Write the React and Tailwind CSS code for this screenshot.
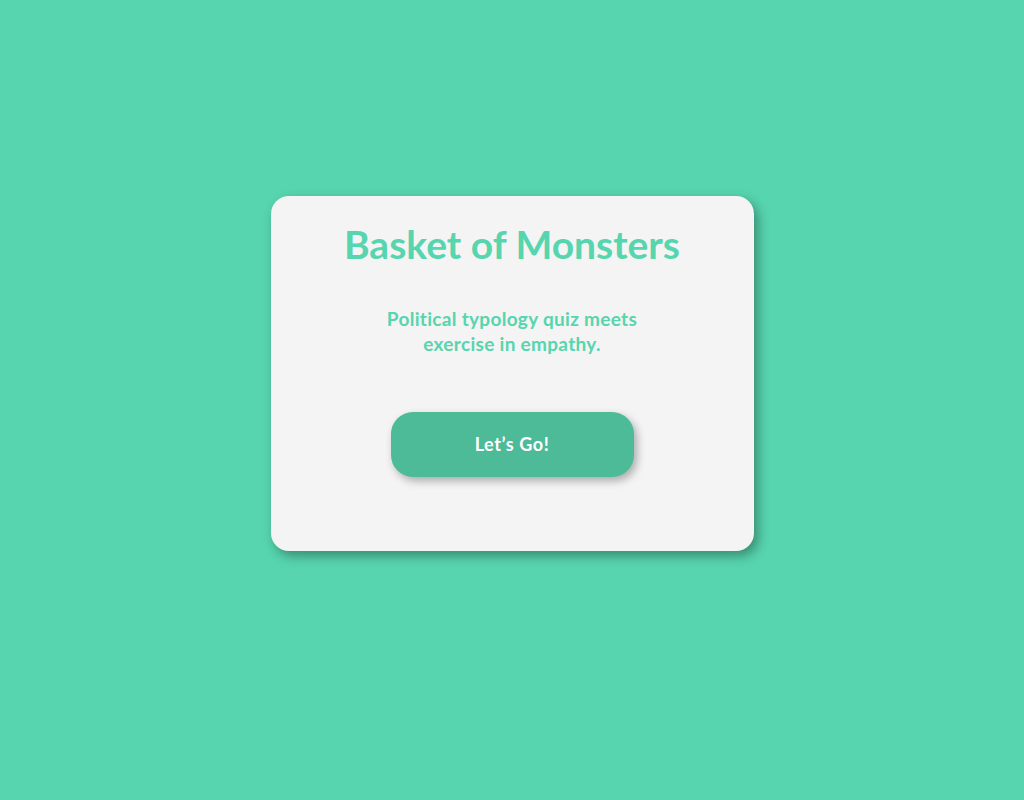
// App.jsx
// Landing card: title, tagline and a start button on a mint background

export default function App() {
  return (
    <div
      className="min-h-screen w-full bg-[#57d5ae] pt-[196px]"
      style={{ fontFamily: 'Lato, "Open Sans", sans-serif' }}
    >
      <div className="mx-auto flex h-[355px] w-[483px] flex-col items-center rounded-[18px] bg-[#f4f4f4] shadow-[4px_5px_12px_rgba(0,0,0,0.35)]">

        {/* Title */}
        <h1 className="mt-[26px] text-[39px] font-bold leading-[44px] text-[#57d5ae]">
          Basket of Monsters
        </h1>

        {/* Tagline */}
        <p className="mt-[40px] w-[290px] text-center text-[19px] font-bold leading-[25px] tracking-[0.3px] text-[#57d5ae]">
          Political typology quiz meets exercise in empathy.
        </p>

        {/* Start button */}
        <button className="mt-[56px] h-[65px] w-[243px] rounded-[22px] bg-[#4dba98] text-[18px] font-bold tracking-[0.6px] text-white shadow-[3px_4px_8px_rgba(0,0,0,0.3)]">
          Let’s Go!
        </button>
      </div>
    </div>
  )
}
